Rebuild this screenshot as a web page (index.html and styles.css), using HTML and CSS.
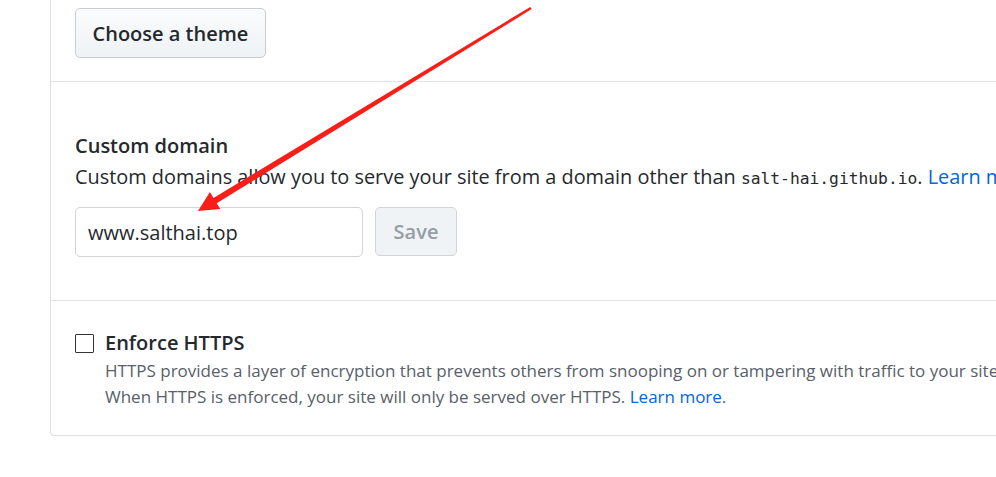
FILE: index.html
```html
<!DOCTYPE html>
<html>
<head>
<meta charset="utf-8">
<link rel="stylesheet" href="styles.css">
</head>
<body>
<div class="box">
  <section class="sec sec-theme">
    <button class="btn">Choose a theme</button>
  </section>
  <section class="sec sec-domain">
    <h3 class="title">Custom domain</h3>
    <p class="desc">Custom domains allow you to serve your site from a domain other than <code>salt-hai.github.io</code>. <a href="#">Learn more.</a></p>
    <form class="row">
      <input class="field" type="text" value="www.salthai.top">
      <button class="btn btn-disabled" type="button">Save</button>
    </form>
  </section>
  <section class="sec sec-https">
    <label class="check">
      <span class="box-check"></span>
      <span class="check-title">Enforce HTTPS</span>
    </label>
    <p class="note">HTTPS provides a layer of encryption that prevents others from snooping on or tampering with traffic to your site.<br>When HTTPS is enforced, your site will only be served over HTTPS. <a href="#">Learn more</a>.</p>
  </section>
</div>
<svg class="arrow" width="996" height="477" viewBox="0 0 996 477">
  <polygon fill="#fa1e18" points="531.7,9.1 530.3,6.9 213.5,198 209.9,192.1 198,211 220.3,209.1 216.7,203.2"/>
</svg>
</body>
</html>
```

FILE: styles.css
```css
html, body {
  margin: 0;
  padding: 0;
  background: #fff;
  overflow: hidden;
}
body {
  width: 996px;
  height: 477px;
  position: relative;
  font-family: "Open Sans", "Noto Sans", sans-serif;
  font-size: 20px;
  color: #24292e;
}
.box {
  margin-left: 50px;
  width: 1100px;
  border: 1px solid #dcdfe3;
  border-top: none;
  border-bottom-left-radius: 4px;
}
.sec {
  padding-left: 24px;
  border-bottom: 1px solid #e1e4e8;
}
.sec:last-child {
  border-bottom: none;
}
.sec-theme {
  padding-top: 8px;
  padding-bottom: 23px;
}
.btn {
  font-family: inherit;
  font-size: 20px;
  font-weight: 600;
  color: #24292e;
  height: 50px;
  padding: 0 16.5px;
  border: 1px solid #c9cdd1;
  border-radius: 5px;
  background: linear-gradient(#fafbfc, #eff3f6);
  display: block;
}
.sec-domain {
  padding-top: 49px;
  padding-bottom: 43px;
}
.title {
  margin: 0;
  font-size: 20px;
  font-weight: 600;
  line-height: 30px;
}
.desc {
  margin: 0;
  font-size: 19.9px;
  line-height: 31px;
  white-space: nowrap;
}
code {
  font-family: "DejaVu Sans Mono", monospace;
  font-size: 16.3px;
}
a {
  color: #0366d6;
  text-decoration: none;
}
.row {
  margin: 13px 0 0;
  display: flex;
  gap: 12px;
}
.field {
  font-family: inherit;
  font-size: 20px;
  color: #24292e;
  width: 288px;
  height: 50px;
  box-sizing: border-box;
  padding: 0 12px;
  border: 1px solid #d1d5da;
  border-radius: 5px;
  outline: none;
}
.btn-disabled {
  width: 82px;
  height: 49px;
  padding: 0;
  color: #959da5;
  background: #eff3f6;
  border-color: #d3d6d9;
}
.sec-https {
  padding-top: 27px;
  padding-bottom: 25px;
}
.check {
  display: flex;
  align-items: center;
  gap: 11px;
  line-height: 30px;
}
.box-check {
  width: 17px;
  height: 17px;
  border: 1.5px solid #333;
  border-radius: 1px;
  box-sizing: content-box;
}
.check-title {
  font-weight: 600;
}
.note {
  margin: 0 0 0 30px;
  font-size: 17px;
  color: #586069;
  line-height: 26px;
  white-space: nowrap;
}
.arrow {
  position: absolute;
  left: 0;
  top: 0;
  pointer-events: none;
}
```
